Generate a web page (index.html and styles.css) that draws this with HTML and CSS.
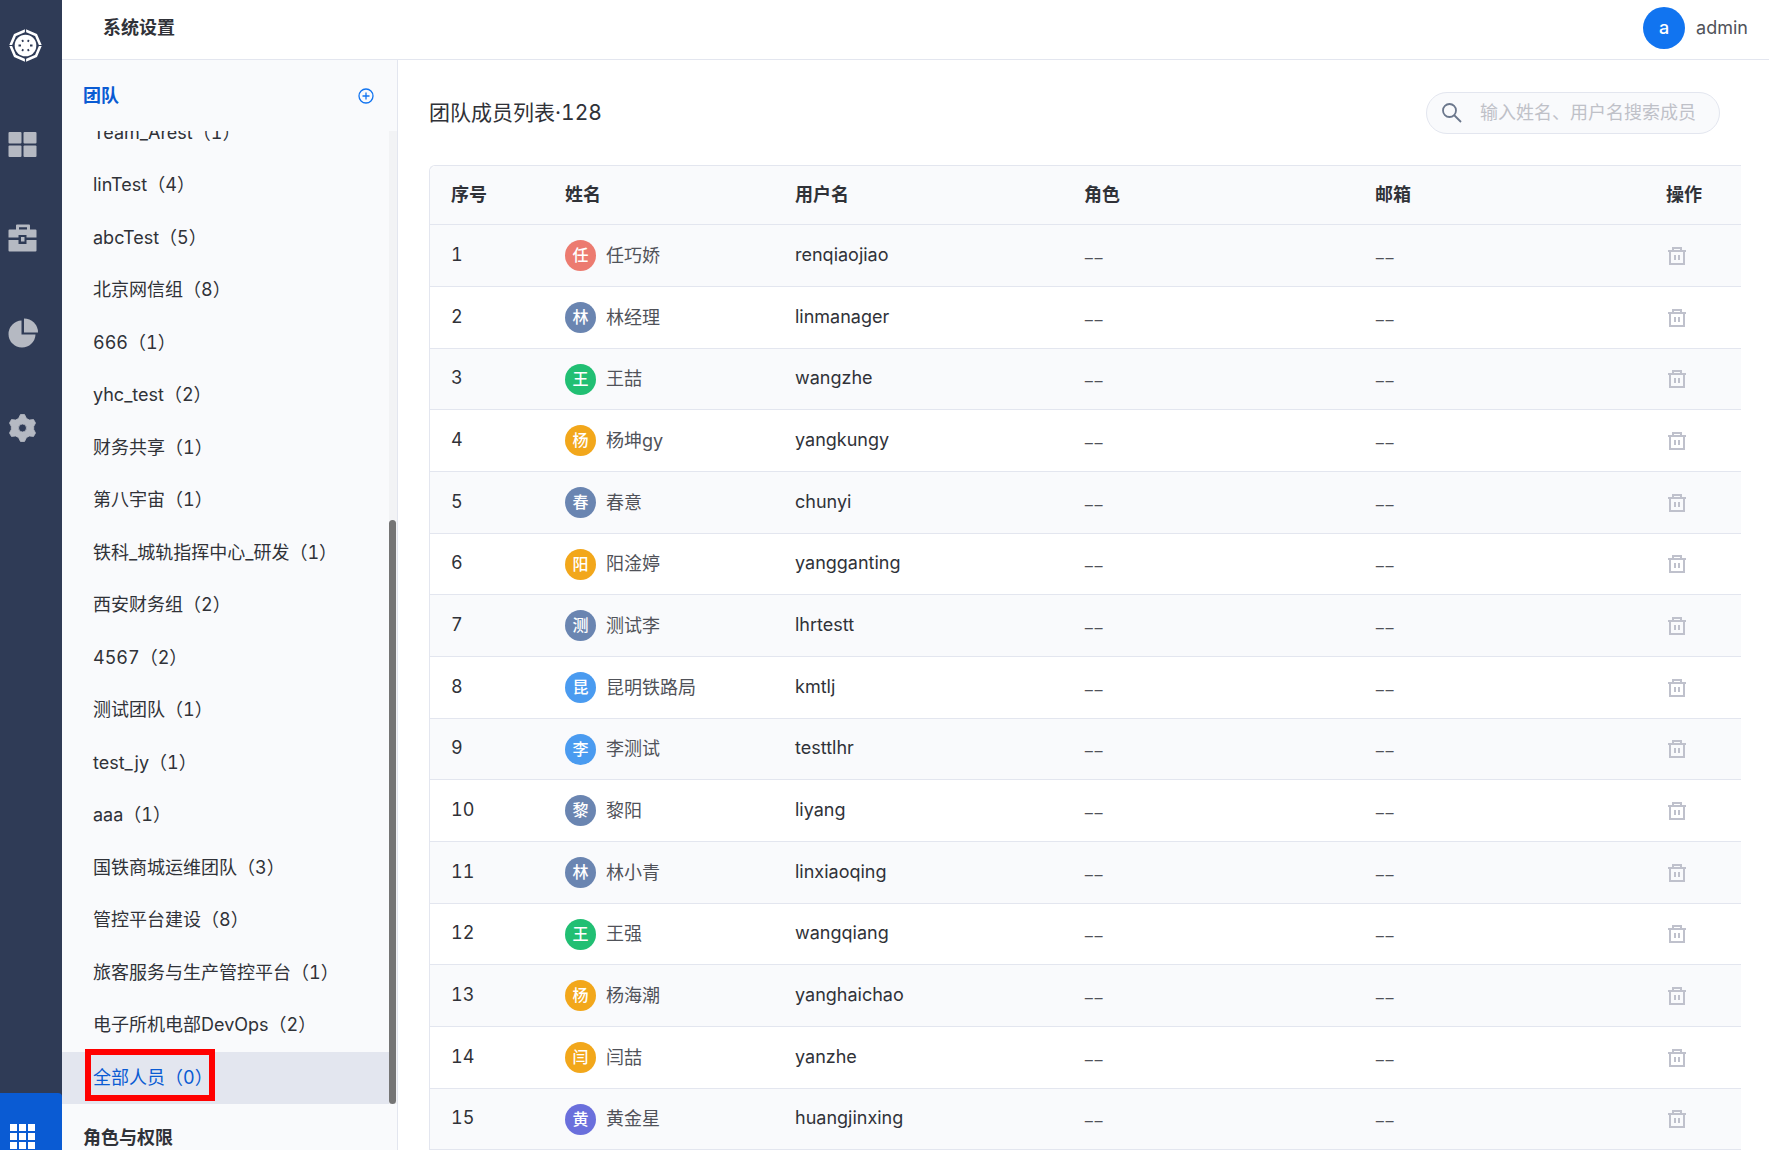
FILE: index.html
```html
<!DOCTYPE html>
<html lang="zh-CN">
<head>
<meta charset="utf-8">
<title>系统设置</title>
<link rel="stylesheet" href="styles.css">
</head>
<body>
<div class="app">
  <nav class="rail" aria-label="主导航">
    <a class="rail-logo" href="#" aria-label="首页">
      <svg width="33" height="33" viewBox="0 0 33 33">
        <path d="M16.500 1.500 27 6 31.500 16.500 27 27 16.500 31.500 6 27 1.500 16.500 6 6Z" fill="none" stroke="#fff" stroke-width="2.600"/>
        <path d="M16.500 0V4M16.500 29V33M0 16.500H4M29 16.500H33" stroke="#2f3b56" stroke-width="1.200"/>
        <circle cx="16.500" cy="16.500" r="10.800" fill="#fff"/>
        <g stroke="#2f3b56" stroke-width="1.800"><path d="M13.200 11l1 1.800M19.800 11l-1 1.800M9.500 16.500h2.500M21 16.500h2.500M13.200 22l1-1.800M19.800 22l-1-1.800"/></g>
      </svg>
    </a>
    <a class="rail-item" href="#" aria-label="工作台">
      <svg width="30" height="30" viewBox="0 0 30 30" fill="currentColor"><rect x="0.500" y="2" width="13" height="11.500" rx="1"/><rect x="15.500" y="2" width="13" height="11.500" rx="1"/><rect x="0.500" y="15.500" width="13" height="11.500" rx="1"/><rect x="15.500" y="15.500" width="13" height="11.500" rx="1"/></svg>
    </a>
    <a class="rail-item" href="#" aria-label="项目">
      <svg width="30" height="30" viewBox="0 1 30 30" fill="currentColor"><path fill-rule="evenodd" d="M1.500 6.500H8V2.500Q8 1.500 9 1.500H21Q22 1.500 22 2.500V6.500H27.500Q28.500 6.500 28.500 7.500V14.500H18.500V12H10.500V14.500H0.500V7.500Q0.500 6.500 1.500 6.500ZM11 4.200V6.500H19V4.200Z"/><path d="M0.500 17H10.500V21H18.500V17H28.500V27.500Q28.500 28.500 27.500 28.500H1.500Q0.500 28.500 0.500 27.500Z"/><rect x="13" y="14" width="3.500" height="4.500"/></svg>
    </a>
    <a class="rail-item" href="#" aria-label="统计">
      <svg width="30" height="30" viewBox="0 0 30 30" fill="currentColor"><path d="M13.500 2.500V16.500H27.500A13.500 13.500 0 1 1 13.500 2.500Z"/><path d="M16 0.500A14 14 0 0 1 30 14.500H16Z"/></svg>
    </a>
    <a class="rail-item" href="#" aria-label="设置">
      <svg width="30" height="30" viewBox="0 -1 30 30" fill="currentColor"><path fill-rule="evenodd" d="M12.500 1.500h4l2 4 3 1.500 4-.5 2 3.500-1.800 3.500v3l1.800 3.500-2 3.500-4-.5-3 1.500-2 4h-4l-2-4-3-1.500-4 .5-2-3.500 1.800-3.500v-3L1.500 10l2-3.500 4 .5 3-1.500ZM14.500 11a4 4 0 1 0 0 8 4 4 0 1 0 0-8Z" stroke="currentColor" stroke-width="0.800" stroke-linejoin="round"/></svg>
    </a>
    <button class="rail-apps" type="button" aria-label="应用">
      <svg width="25" height="25" viewBox="0 0 25 25" fill="#fff"><path d="M0 0h7v7H0ZM9 0h7v7H9ZM18 0h7v7h-7ZM0 9h7v7H0ZM9 9h7v7H9ZM18 9h7v7h-7ZM0 18h7v7H0ZM9 18h7v7H9ZM18 18h7v7h-7Z"/></svg>
    </button>
  </nav>

  <div class="page">
    <header class="topbar">
      <h1 class="topbar-title">系统设置</h1>
      <div class="user"><span class="user-avatar">a</span><span>admin</span></div>
    </header>
    <div class="body">
      <aside class="sidebar">
        <div class="sidebar-head">
          <h2 class="sidebar-title">团队</h2>
          <button class="add" type="button" aria-label="新增团队"><svg width="16" height="16" viewBox="0 0 16 16" fill="none" stroke="currentColor" stroke-width="1.300"><circle cx="8" cy="8" r="7"/><path d="M8 4.500v7M4.500 8h7"/></svg></button>
        </div>
        <div class="teams">
          <ul class="team-list">
            <li><a href="#">Team_Arest（1）</a></li>
            <li><a href="#">linTest（4）</a></li>
            <li><a href="#">abcTest（5）</a></li>
            <li><a href="#">北京网信组（8）</a></li>
            <li><a href="#">666（1）</a></li>
            <li><a href="#">yhc_test（2）</a></li>
            <li><a href="#">财务共享（1）</a></li>
            <li><a href="#">第八宇宙（1）</a></li>
            <li><a href="#">铁科_城轨指挥中心_研发（1）</a></li>
            <li><a href="#">西安财务组（2）</a></li>
            <li><a href="#">4567（2）</a></li>
            <li><a href="#">测试团队（1）</a></li>
            <li><a href="#">test_jy（1）</a></li>
            <li><a href="#">aaa（1）</a></li>
            <li><a href="#">国铁商城运维团队（3）</a></li>
            <li><a href="#">管控平台建设（8）</a></li>
            <li><a href="#">旅客服务与生产管控平台（1）</a></li>
            <li><a href="#">电子所机电部DevOps（2）</a></li>
            <li class="active"><a href="#">全部人员（0）</a><span class="highlight"></span></li>
          </ul>
          <div class="scrollbar"><div class="scrollbar-thumb"></div></div>
        </div>
        <h2 class="sidebar-foot">角色与权限</h2>
      </aside>

      <main class="main">
        <div class="toolbar">
          <h2 class="list-title">团队成员列表·128</h2>
          <label class="search">
            <svg width="20" height="20" viewBox="0 0 20 20" fill="none" stroke="#6b778c" stroke-width="1.800"><circle cx="7.500" cy="7.500" r="6.500"/><path d="M12 12l7 7"/></svg>
            <input type="search" placeholder="输入姓名、用户名搜索成员" aria-label="搜索成员">
          </label>
        </div>
        <table class="members">
          <thead><tr><th class="c-no">序号</th><th class="c-name">姓名</th><th class="c-login">用户名</th><th>角色</th><th>邮箱</th><th class="c-op">操作</th></tr></thead>
          <tbody id="rows"></tbody>
        </table>
      </main>
    </div>
  </div>
</div>
<script src="members.js"></script>
</body>
</html>
```
FILE: styles.css
```css
* { box-sizing: border-box; }

body {
  margin: 0;
  font-family: Inter, "Noto Sans CJK SC", sans-serif;
  font-size: 18px;
  font-variant-numeric: tabular-nums;
  line-height: 26px;
  color: #303238;
  background: #fff;
}

h1, h2, ul { margin: 0; padding: 0; font-size: 18px; }
ul { list-style: none; }
a { color: inherit; text-decoration: none; }
button { border: 0; padding: 0; background: none; font: inherit; cursor: pointer; }
svg { display: block; flex: none; }

.app { display: flex; height: 100vh; overflow: hidden; }

/* icon rail */
.rail {
  flex: 0 0 62px;
  display: flex;
  flex-direction: column;
  background: #2f3b56;
  color: #b5b9c2;
}
.rail-logo { height: 98px; padding: 29px 0 0 9px; }
.rail-item { height: 94px; display: flex; align-items: center; padding-left: 8px; }
.rail-apps {
  height: 57px;
  margin-top: auto;
  padding: 30px 0 0 10px;
  background: #0a5bd3;
  border-top-right-radius: 4px;
}

.page { flex: 1; min-width: 0; display: flex; flex-direction: column; }

.topbar {
  flex: 0 0 60px;
  display: flex;
  justify-content: space-between;
  align-items: center;
  padding: 0 21px 4px 41px;
  border-bottom: 1px solid #e3e6ef;
}
.topbar-title { font-weight: 700; }
.user { display: flex; align-items: center; gap: 11px; color: #505259; }
.user-avatar {
  width: 42px;
  height: 42px;
  border-radius: 50%;
  background: #1174f0;
  color: #fff;
  font-weight: 500;
  line-height: 42px;
  text-align: center;
}

.body { flex: 1; min-height: 0; display: flex; }

/* team sidebar */
.sidebar {
  flex: 0 0 336px;
  display: flex;
  flex-direction: column;
  background: #f9fafc;
  border-right: 1px solid #e3e6ef;
}
.sidebar-head {
  flex: 0 0 71px;
  display: flex;
  justify-content: space-between;
  align-items: center;
  padding: 0 23px 0 21px;
}
.sidebar-title { font-weight: 700; color: #0a5bd3; }
.add { color: #1174f0; }
.teams { flex: 1; min-height: 0; display: flex; overflow: hidden; }
.team-list {
  flex: 1;
  display: flex;
  flex-direction: column;
  justify-content: flex-end;
}
.team-list li { flex: 0 0 52px; position: relative; }
.team-list li:nth-child(even) { flex-basis: 53px; }
.team-list a { display: block; padding-left: 31px; line-height: 52px; white-space: nowrap; }
.team-list .active { background: #e3e6ef; color: #0a5bd3; }
.highlight {
  position: absolute;
  left: 23px;
  top: -3px;
  width: 130px;
  height: 52px;
  border: 6px solid #f00;
}
.scrollbar {
  flex: 0 0 8px;
  display: flex;
  flex-direction: column;
  justify-content: flex-end;
  padding-right: 1px;
  background: #f2f3f5;
}
.scrollbar-thumb { height: 60%; border-radius: 4px; background: #757575; }
.sidebar-foot { flex: 0 0 46px; height: 46px; padding: 22px 0 0 21px; line-height: 24px; font-weight: 700; }

/* member list */
.main { flex: 1; min-width: 0; padding: 32px 28px 0 31px; overflow: hidden; }
.toolbar {
  display: flex;
  justify-content: space-between;
  align-items: center;
  padding-right: 21px;
  margin-bottom: 31px;
}
.list-title { font-size: 21px; font-weight: 400; }
.search {
  width: 294px;
  height: 42px;
  display: flex;
  align-items: center;
  gap: 18px;
  padding: 0 4px 0 15px;
  border: 1px solid #e3e6ef;
  border-radius: 21px;
  background: #f9fafc;
}
.search input {
  flex: 1;
  min-width: 0;
  padding: 0;
  border: 0;
  outline: 0;
  appearance: none;
  background: none;
  font: inherit;
}
.search input::placeholder { color: #bfc1c8; opacity: 1; }

.members {
  width: 100%;
  table-layout: fixed;
  border-collapse: separate;
  border-spacing: 0;
  border: 1px solid #e3e6ef;
  border-right: 0;
  border-top-left-radius: 6px;
}
.members th, .members td {
  padding: 0 0 0 21px;
  border-bottom: 1px solid #e3e6ef;
  text-align: left;
  white-space: nowrap;
}
.members th { height: 59px; font-weight: 700; background: #f9fafc; }
.members th:first-child { border-top-left-radius: 6px; }
.members td { height: 62px; }
.members tr:nth-child(3n) td { height: 61px; }
.members tbody tr:nth-child(odd) { background: #f9fafc; }
.c-no { width: 114px; }
.c-name { width: 230px; }
.c-login { width: 289px; }
.c-op { width: 96px; }
.members .text { padding-bottom: 2px; }
.members .none { font-family: "Noto Sans CJK SC", sans-serif; color: #505259; }
.person { display: flex; align-items: center; gap: 10px; color: #505259; }
.avatar {
  width: 31px;
  height: 31px;
  border-radius: 50%;
  color: #fff;
  font-size: 16px;
  font-weight: 500;
  line-height: 31px;
  text-align: center;
}
.red { background: #ec7b70; }
.slate { background: #6a85b1; }
.green { background: #21bf73; }
.amber { background: #f2a71b; }
.blue { background: #4a9bf0; }
.violet { background: #6a6fdc; }
.remove { display: block; padding-left: 2px; color: #bfc1cc; }
```
FILE: members.js
```js
const members = [
  ["任巧娇", "renqiaojiao", "red"],
  ["林经理", "linmanager", "slate"],
  ["王喆", "wangzhe", "green"],
  ["杨坤gy", "yangkungy", "amber"],
  ["春意", "chunyi", "slate"],
  ["阳淦婷", "yangganting", "amber"],
  ["测试李", "lhrtestt", "slate"],
  ["昆明铁路局", "kmtlj", "blue"],
  ["李测试", "testtlhr", "blue"],
  ["黎阳", "liyang", "slate"],
  ["林小青", "linxiaoqing", "slate"],
  ["王强", "wangqiang", "green"],
  ["杨海潮", "yanghaichao", "amber"],
  ["闫喆", "yanzhe", "amber"],
  ["黄金星", "huangjinxing", "violet"]
];
const trash = '<svg width="18" height="18" viewBox="0 0 18 18" fill="none" stroke="currentColor" stroke-width="2"><path d="M0 4H18M5 4V1H13V4M2 4V17H16V4"/><path d="M7 8V13M11 8V13"/></svg>';
document.getElementById("rows").innerHTML = members.map(([name, login, tone], i) => `
  <tr><td class="text">${i + 1}</td>
  <td><div class="person"><span class="avatar ${tone}">${name[0]}</span><span>${name}</span></div></td>
  <td class="text">${login}</td><td class="none">––</td><td class="none">––</td>
  <td><button class="remove" type="button" aria-label="删除${name}">${trash}</button></td></tr>`).join("");
```
